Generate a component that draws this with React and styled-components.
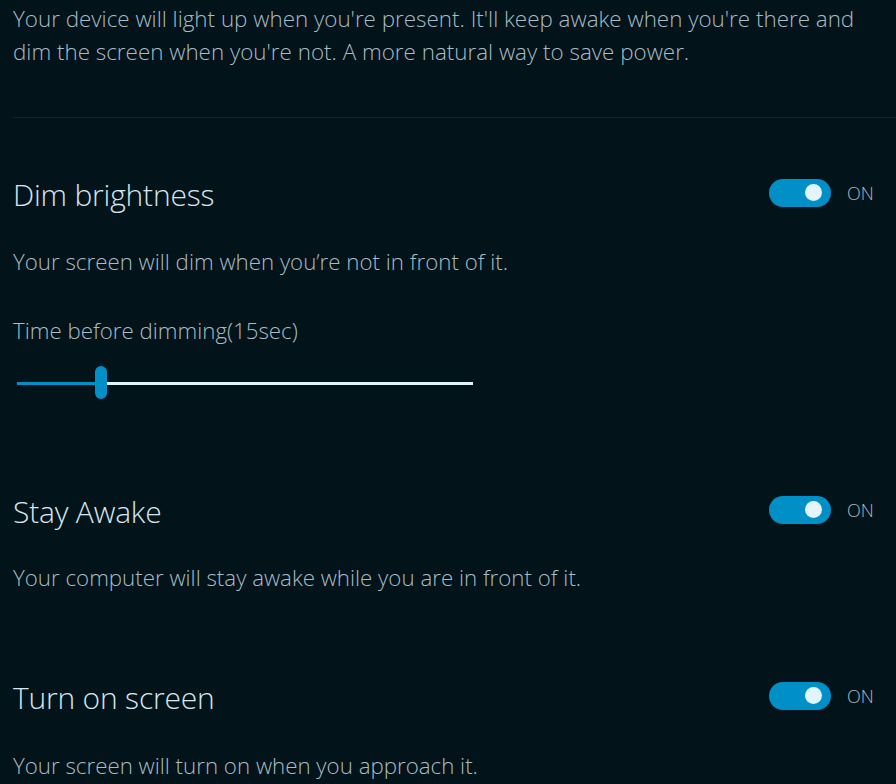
import React, { useState } from 'react';
import styled, { createGlobalStyle } from 'styled-components';

const GlobalStyle = createGlobalStyle`
  html, body {
    margin: 0;
    padding: 0;
    background-color: #02131a;
  }
  body {
    font-family: 'Open Sans', 'Noto Sans', sans-serif;
    font-weight: 300;
  }
`;

export const Page = styled.div`
  width: 896px;
  height: 784px;
  overflow: hidden;
  background-color: #02131a;
  padding: 2px 19px 0 13px;
  box-sizing: border-box;
`;

export const Intro = styled.p`
  margin: 0;
  max-width: 850px;
  font-size: 22.4px;
  line-height: 33px;
  color: #a8bcc5;
`;

export const Divider = styled.div`
  height: 1px;
  background-color: #0d2630;
  margin: 49px -19px 56px 0;
`;

export const Section = styled.div`
  margin-bottom: ${(p) => p.gap || 85}px;
`;

export const Header = styled.div`
  display: flex;
  align-items: center;
  height: 40px;
`;

export const Title = styled.h2`
  flex: 1;
  margin: 0;
  font-size: 30px;
  font-weight: 300;
  color: #d4e6ee;
  letter-spacing: -0.2px;
`;

export const ToggleWrap = styled.div`
  display: flex;
  align-items: center;
  gap: 16px;
  margin-top: -3px;
`;

export const Track = styled.button`
  position: relative;
  width: 62px;
  height: 28px;
  border: none;
  padding: 0;
  border-radius: 14px;
  background-color: ${(p) => (p.on ? '#008fc6' : '#3a4a52')};
  cursor: pointer;
`;

export const Knob = styled.span`
  position: absolute;
  top: 5px;
  left: ${(p) => (p.on ? '36px' : '10px')};
  width: 17px;
  height: 17px;
  border-radius: 50%;
  background-color: #e2f4fd;
  transition: left 0.2s;
`;

export const State = styled.span`
  font-size: 18px;
  color: #a8bcc5;
  width: 30px;
`;

export const Desc = styled.p`
  margin: ${(p) => p.top || 34}px 0 0;
  font-size: 22.3px;
  line-height: 28px;
  color: #a8bcc5;
`;

export const SliderRow = styled.div`
  position: relative;
  width: 456px;
  height: 34px;
  margin: 21px 0 6px 4px;
  display: flex;
  align-items: center;
`;

export const Rail = styled.div`
  flex: 1;
  height: 3px;
  background: linear-gradient(
    to right,
    #008fc6 0,
    #008fc6 ${(p) => p.pct}%,
    #dff3fc ${(p) => p.pct}%,
    #dff3fc 100%
  );
`;

export const Thumb = styled.div`
  position: absolute;
  top: 0;
  width: 12px;
  height: 33px;
  margin-left: -6px;
  border-radius: 6px;
  background-color: #008fc6;
`;

function Toggle({ initial = true }) {
  const [on, setOn] = useState(initial);
  return (
    <ToggleWrap>
      <Track on={on ? 1 : 0} onClick={() => setOn(!on)}>
        <Knob on={on ? 1 : 0} />
      </Track>
      <State>{on ? 'ON' : 'OFF'}</State>
    </ToggleWrap>
  );
}

function App() {
  const pct = 18.4;
  return (
    <>
      <GlobalStyle />
      <Page>
        <Intro>
          Your device will light up when you're present. It'll keep awake when you're there and
          dim the screen when you're not. A more natural way to save power.
        </Intro>
        <Divider />

        <Section gap={91}>
          <Header>
            <Title>Dim brightness</Title>
            <Toggle />
          </Header>
          <Desc>Your screen will dim when you’re not in front of it.</Desc>
          <Desc top={41}>Time before dimming(15sec)</Desc>
          <SliderRow>
            <Rail pct={pct} />
            <Thumb style={{ left: `${pct}%` }} />
          </SliderRow>
        </Section>

        <Section gap={85}>
          <Header>
            <Title>Stay Awake</Title>
            <Toggle />
          </Header>
          <Desc top={33}>Your computer will stay awake while you are in front of it.</Desc>
        </Section>

        <Section>
          <Header>
            <Title>Turn on screen</Title>
            <Toggle />
          </Header>
          <Desc top={35}>Your screen will turn on when you approach it.</Desc>
        </Section>
      </Page>
    </>
  );
}

export default App;
